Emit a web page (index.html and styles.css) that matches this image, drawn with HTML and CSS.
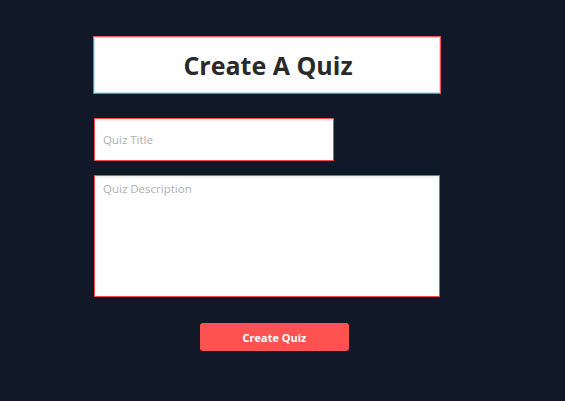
FILE: index.html
```html
<!DOCTYPE html>
<html>
<head>
<meta charset="utf-8">
<link rel="stylesheet" href="styles.css">
</head>
<body>
<div class="page">
  <form class="quiz-form">
    <div class="heading-box"><h1 class="heading">Create A Quiz</h1></div>
    <input class="title-input" type="text" placeholder="Quiz Title">
    <textarea class="desc-input" placeholder="Quiz Description"></textarea>
    <button class="submit-btn" type="button">Create Quiz</button>
  </form>
</div>
</body>
</html>
```
FILE: styles.css
```css
html, body {
  margin: 0;
  padding: 0;
  background: #111827;
  height: 100%;
}
.page {
  font-family: "Open Sans", "Noto Sans", sans-serif;
  padding: 36px 0 0 93px;
}
.quiz-form {
  display: flex;
  flex-direction: column;
  align-items: flex-start;
  width: 348px;
}
.heading-box {
  box-sizing: border-box;
  width: 348px;
  height: 58px;
  background: #fff;
  border: 1px solid #f0525a;
  box-shadow: inset 0 0 0 1px #bfe6f5;
  display: flex;
  align-items: center;
  justify-content: center;
  padding-left: 2px;
  padding-bottom: 1px;
}
.heading {
  margin: 0;
  font-size: 25px;
  font-weight: 700;
  color: #2a2a2a;
  letter-spacing: 0;
}
.title-input {
  box-sizing: border-box;
  margin: 24px 0 0 1px;
  width: 240px;
  height: 43px;
  border: 1px solid #f04b4b;
  box-shadow: inset 0 2px 2px rgba(0,0,0,0.06);
  background: #fff;
  padding: 0 8px;
  font-family: inherit;
  font-size: 11.5px;
  outline: none;
}
.desc-input {
  box-sizing: border-box;
  margin: 14px 0 0 1px;
  width: 346px;
  height: 122px;
  border: 1px solid #f04b4b;
  box-shadow: inset 0 2px 2px rgba(0,0,0,0.06);
  background: #fff;
  padding: 5px 8px;
  font-family: inherit;
  font-size: 11.5px;
  resize: none;
  outline: none;
  display: block;
}
.title-input::placeholder, .desc-input::placeholder {
  color: #b0b0b0;
}
.submit-btn {
  margin: 26px 0 0 107px;
  width: 149px;
  height: 28px;
  border: none;
  border-radius: 3px;
  background: #fd5252;
  color: #fff;
  font-family: inherit;
  font-weight: 700;
  font-size: 11px;
  padding: 0;
  cursor: pointer;
}
```
